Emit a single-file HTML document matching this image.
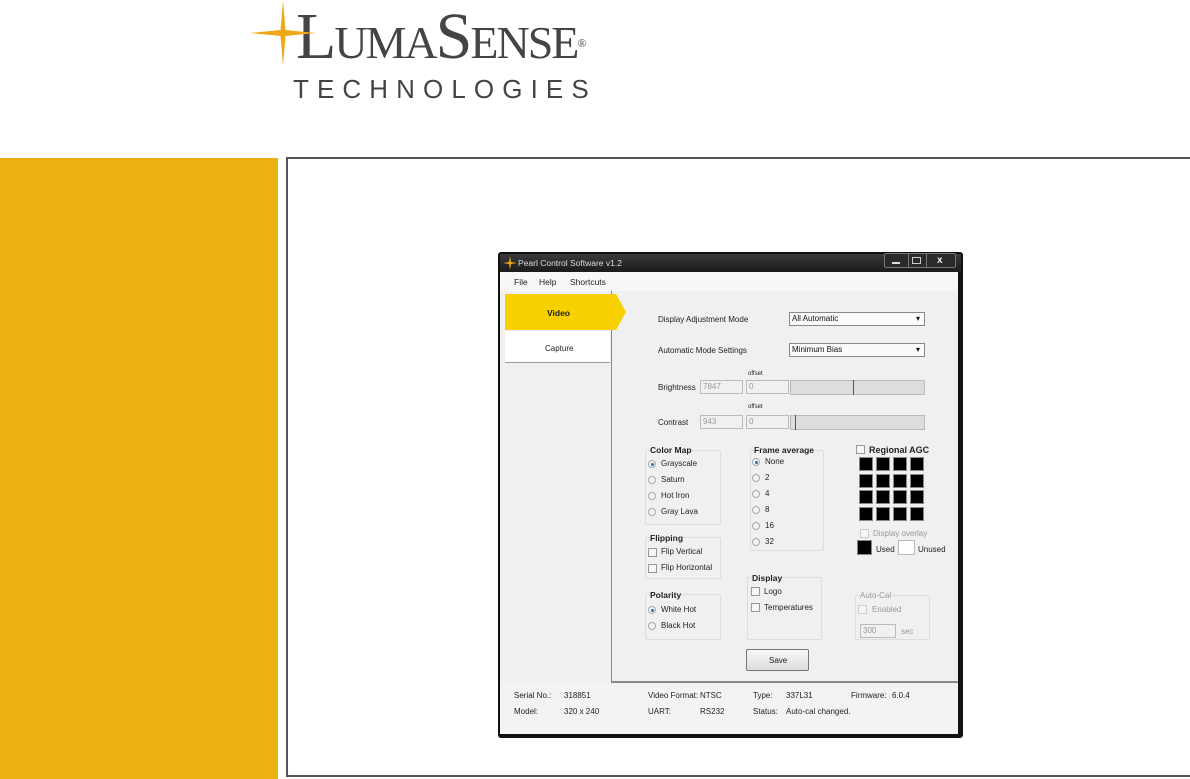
<!DOCTYPE html>
<html><head><meta charset="utf-8"><style>
*{margin:0;padding:0;box-sizing:border-box}
body{width:1190px;height:779px;background:#fff;position:relative;overflow:hidden;font-family:"Liberation Sans",sans-serif}
.a{position:absolute}
.t{position:absolute;font-size:8px;color:#222;white-space:nowrap}
.g{color:#999}
.b{font-weight:bold;font-size:8.5px}
.rad{position:absolute;width:8px;height:8px;border-radius:50%;border:1px solid #aaa;background:#f4f4f4}
.rad.on::after{content:"";position:absolute;left:1.5px;top:1.5px;width:3px;height:3px;border-radius:50%;background:#2a6fb0}
.chk{position:absolute;width:9px;height:9px;border:1px solid #999;background:#f6f6f6}
.grp{position:absolute;border:1px solid #ddd;border-radius:2px}
.sq{position:absolute;width:14px;height:14px;background:#000;border:1px solid #888}
.inp{position:absolute;height:14px;border:1px solid #bbb;background:#f0f0f0;font-size:8px;color:#999;padding-left:2px;line-height:12px}
</style></head><body>
<!-- logo -->
<div class="a" style="left:296px;top:4px;font-family:'Liberation Serif',serif;font-size:66px;line-height:66px;color:#444;letter-spacing:-2px">L<span style="font-size:46px">UMA</span>S<span style="font-size:46px">ENSE</span><span style="font-size:12px;vertical-align:top;position:relative;top:6px;letter-spacing:0">®</span></div>
<svg class="a" style="left:250px;top:0" width="68" height="68"><path d="M33 0 L35.5 30 L66 33 L35.5 36 L33 66 L30.5 36 L0 33 L30.5 30 Z" fill="#f0a818"/></svg>
<div class="a" style="left:293px;top:76px;font-size:26px;line-height:26px;color:#444;letter-spacing:8.1px">TECHNOLOGIES</div>
<!-- sidebar & frame -->
<div class="a" style="left:0;top:158px;width:278px;height:621px;background:#ebb012"></div>
<div class="a" style="left:286px;top:157px;width:904px;height:620px;border-left:2px solid #555;border-top:2px solid #555;border-bottom:2px solid #555"></div>
<!-- window -->
<div class="a" style="left:498px;top:252px;width:465px;height:486px;background:#111;border-radius:3px"></div>
<div class="a" style="left:500px;top:254px;width:461px;height:18px;background:linear-gradient(#3a3a3a,#1a1a1a)"></div>
<svg class="a" style="left:502px;top:255px" width="16" height="16"><path d="M8 1 L9 7 L15 8 L9 9 L8 15 L7 9 L1 8 L7 7Z" fill="#f0a818"/></svg>
<div class="t" style="left:518px;top:258px;color:#ddd;font-size:8.5px">Pearl Control Software v1.2</div>
<div class="a" style="left:884px;top:253px;width:72px;height:15px;border:1px solid #777;border-radius:2px;background:#2a2a2a"></div>
<div class="a" style="left:908px;top:253px;width:1px;height:15px;background:#777"></div>
<div class="a" style="left:926px;top:253px;width:1px;height:15px;background:#777"></div>
<div class="a" style="left:892px;top:262px;width:8px;height:2px;background:#ddd"></div>
<div class="a" style="left:912px;top:257px;width:9px;height:7px;border:1px solid #ccc"></div>
<div class="t" style="left:937px;top:255px;color:#eee;font-weight:bold;font-size:10px">x</div>
<div class="a" style="left:500px;top:272px;width:458px;height:19px;background:#f7f7f7"></div>
<div class="t" style="left:514px;top:277px;font-size:8.5px">File</div>
<div class="t" style="left:539px;top:277px;font-size:8.5px">Help</div>
<div class="t" style="left:570px;top:277px;font-size:8.5px">Shortcuts</div>
<div class="a" style="left:500px;top:291px;width:111px;height:392px;background:#f0f0f0"></div>
<div class="a" style="left:611px;top:291px;width:347px;height:392px;background:#f0f0f0;border-left:1px solid #888;border-bottom:2px solid #888"></div>
<svg class="a" style="left:505px;top:294px" width="122" height="38"><path d="M0 0 H111 L121 18 L111 36 H0Z" fill="#f8d000"/></svg>
<div class="t b" style="left:547px;top:308px">Video</div>
<div class="a" style="left:505px;top:331px;width:105px;height:32px;background:#fff;border-bottom:1px solid #999"></div>
<div class="t" style="left:545px;top:344px">Capture</div>
<div class="a" style="left:500px;top:683px;width:458px;height:51px;background:#f3f3f3"></div>
<div class="t" style="left:658px;top:315px">Display Adjustment Mode</div>
<div class="inp" style="left:789px;top:312px;width:136px;color:#111;background:#fafafa;border-color:#888">All Automatic<span style="position:absolute;right:4px">▾</span></div>
<div class="t" style="left:658px;top:346px">Automatic Mode Settings</div>
<div class="inp" style="left:789px;top:343px;width:136px;color:#111;background:#fafafa;border-color:#888">Minimum Bias<span style="position:absolute;right:4px">▾</span></div>
<div class="t" style="left:748px;top:371px;font-size:6px">offset</div>
<div class="t" style="left:658px;top:383px">Brightness</div>
<div class="inp" style="left:700px;top:380px;width:43px">7847</div>
<div class="inp" style="left:746px;top:380px;width:43px">0</div>
<div class="a" style="left:790px;top:380px;width:135px;height:15px;background:#ddd;border:1px solid #bbb"></div>
<div class="a" style="left:853px;top:380px;width:1px;height:15px;background:#555"></div>
<div class="t" style="left:748px;top:404px;font-size:6px">offset</div>
<div class="t" style="left:658px;top:418px">Contrast</div>
<div class="inp" style="left:700px;top:415px;width:43px">943</div>
<div class="inp" style="left:746px;top:415px;width:43px">0</div>
<div class="a" style="left:790px;top:415px;width:135px;height:15px;background:#ddd;border:1px solid #bbb"></div>
<div class="a" style="left:795px;top:415px;width:1px;height:15px;background:#555"></div>
<!-- color map -->
<div class="grp" style="left:645px;top:450px;width:76px;height:75px"></div>
<div class="t b" style="left:650px;top:445px;background:#f0f0f0">Color Map</div>
<div class="rad on" style="left:648px;top:460px"></div><div class="t" style="left:661px;top:459px">Grayscale</div>
<div class="rad" style="left:648px;top:476px"></div><div class="t" style="left:661px;top:475px">Saturn</div>
<div class="rad" style="left:648px;top:492px"></div><div class="t" style="left:661px;top:491px">Hot Iron</div>
<div class="rad" style="left:648px;top:508px"></div><div class="t" style="left:661px;top:507px">Gray Lava</div>
<div class="grp" style="left:645px;top:537px;width:76px;height:42px"></div>
<div class="t b" style="left:650px;top:533px;background:#f0f0f0">Flipping</div>
<div class="chk" style="left:648px;top:548px"></div><div class="t" style="left:661px;top:547px">Flip Vertical</div>
<div class="chk" style="left:648px;top:564px"></div><div class="t" style="left:661px;top:563px">Flip Horizontal</div>
<div class="grp" style="left:645px;top:594px;width:76px;height:46px"></div>
<div class="t b" style="left:650px;top:590px;background:#f0f0f0">Polarity</div>
<div class="rad on" style="left:648px;top:606px"></div><div class="t" style="left:661px;top:605px">White Hot</div>
<div class="rad" style="left:648px;top:622px"></div><div class="t" style="left:661px;top:621px">Black Hot</div>
<!-- frame avg -->
<div class="grp" style="left:750px;top:450px;width:74px;height:101px"></div>
<div class="t b" style="left:754px;top:445px;background:#f0f0f0">Frame average</div>
<div class="rad on" style="left:752px;top:458px"></div><div class="t" style="left:765px;top:457px">None</div>
<div class="rad" style="left:752px;top:474px"></div><div class="t" style="left:765px;top:473px">2</div>
<div class="rad" style="left:752px;top:490px"></div><div class="t" style="left:765px;top:489px">4</div>
<div class="rad" style="left:752px;top:506px"></div><div class="t" style="left:765px;top:505px">8</div>
<div class="rad" style="left:752px;top:522px"></div><div class="t" style="left:765px;top:521px">16</div>
<div class="rad" style="left:752px;top:538px"></div><div class="t" style="left:765px;top:537px">32</div>
<div class="grp" style="left:747px;top:577px;width:75px;height:63px"></div>
<div class="t b" style="left:752px;top:573px;background:#f0f0f0">Display</div>
<div class="chk" style="left:751px;top:587px"></div><div class="t" style="left:764px;top:587px">Logo</div>
<div class="chk" style="left:751px;top:603px"></div><div class="t" style="left:764px;top:603px">Temperatures</div>
<!-- AGC -->
<div class="chk" style="left:856px;top:445px"></div><div class="t b" style="left:869px;top:445px;font-size:9px">Regional AGC</div>
<div class="sq" style="left:859px;top:457px"></div><div class="sq" style="left:876px;top:457px"></div><div class="sq" style="left:893px;top:457px"></div><div class="sq" style="left:910px;top:457px"></div>
<div class="sq" style="left:859px;top:474px"></div><div class="sq" style="left:876px;top:474px"></div><div class="sq" style="left:893px;top:474px"></div><div class="sq" style="left:910px;top:474px"></div>
<div class="sq" style="left:859px;top:490px"></div><div class="sq" style="left:876px;top:490px"></div><div class="sq" style="left:893px;top:490px"></div><div class="sq" style="left:910px;top:490px"></div>
<div class="sq" style="left:859px;top:507px"></div><div class="sq" style="left:876px;top:507px"></div><div class="sq" style="left:893px;top:507px"></div><div class="sq" style="left:910px;top:507px"></div>
<div class="chk" style="left:860px;top:529px;border-color:#ccc"></div><div class="t g" style="left:873px;top:529px">Display overlay</div>
<div class="a" style="left:857px;top:540px;width:15px;height:15px;background:#000;border:1px solid #888"></div><div class="t" style="left:876px;top:545px">Used</div>
<div class="a" style="left:898px;top:540px;width:17px;height:15px;background:#fff;border:1px solid #bbb"></div><div class="t" style="left:918px;top:545px">Unused</div>
<div class="grp" style="left:855px;top:595px;width:75px;height:45px"></div>
<div class="t g" style="left:860px;top:591px;background:#f0f0f0">Auto-Cal</div>
<div class="chk" style="left:858px;top:605px;border-color:#ccc"></div><div class="t g" style="left:872px;top:605px">Enabled</div>
<div class="inp" style="left:860px;top:624px;width:36px">300</div><div class="t g" style="left:901px;top:627px">sec</div>
<div class="a" style="left:746px;top:649px;width:63px;height:22px;border:1px solid #777;border-radius:2px;background:linear-gradient(#f8f8f8,#dcdcdc)"></div>
<div class="t" style="left:769px;top:656px">Save</div>
<!-- status -->
<div class="t" style="left:514px;top:691px">Serial No.:</div><div class="t" style="left:564px;top:691px">318851</div>
<div class="t" style="left:514px;top:707px">Model:</div><div class="t" style="left:564px;top:707px">320 x 240</div>
<div class="t" style="left:648px;top:691px">Video Format:</div><div class="t" style="left:700px;top:691px">NTSC</div>
<div class="t" style="left:648px;top:707px">UART:</div><div class="t" style="left:700px;top:707px">RS232</div>
<div class="t" style="left:753px;top:691px">Type:</div><div class="t" style="left:786px;top:691px">337L31</div>
<div class="t" style="left:753px;top:707px">Status:</div><div class="t" style="left:786px;top:707px">Auto-cal changed.</div>
<div class="t" style="left:851px;top:691px">Firmware:</div><div class="t" style="left:892px;top:691px">6.0.4</div>
</body></html>
